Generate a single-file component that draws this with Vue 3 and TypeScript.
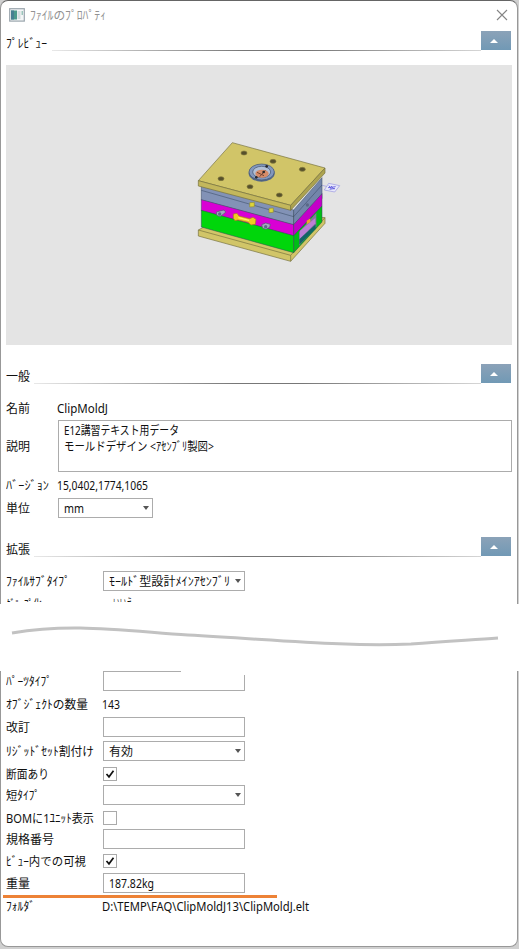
<script setup lang="ts">
import { ref } from 'vue'

interface Row {
  label: string
  width: number
  kind: 'text' | 'input' | 'select' | 'check'
  value?: string
  valueWidth?: number
  checked?: boolean
  height: number
}

// Condenses a run of text to the given advance width.
const vFit = {
  mounted(el: HTMLElement, binding: { value?: number }) {
    if (!binding.value || !el.offsetWidth) return
    el.style.transform = `scaleX(${binding.value / el.getBoundingClientRect().width})`
  },
}

const rows = ref<Row[]>([
  { label: 'ﾊﾟｰﾂﾀｲﾌﾟ', width: 46, kind: 'input', height: 20 },
  { label: 'ｵﾌﾞｼﾞｪｸﾄの数量', width: 82, kind: 'text', value: '143', valueWidth: 18, height: 26 },
  { label: '改訂', width: 24, kind: 'input', height: 20 },
  { label: 'ﾘｼﾞｯﾄﾞｾｯﾄ割付け', width: 88, kind: 'select', value: '有効', valueWidth: 24, height: 28 },
  { label: '断面あり', width: 43, kind: 'check', checked: true, height: 18 },
  { label: '短ﾀｲﾌﾟ', width: 34, kind: 'select', height: 24 },
  { label: 'BOMに1ﾕﾆｯﾄ表示', width: 88, kind: 'check', checked: false, height: 22 },
  { label: '規格番号', width: 48, kind: 'input', height: 20 },
  { label: 'ﾋﾞｭｰ内での可視', width: 80, kind: 'check', checked: true, height: 24 },
  { label: '重量', width: 24, kind: 'input', value: '187.82kg', valueWidth: 45, height: 20 },
  { label: 'ﾌｫﾙﾀﾞ', width: 29, kind: 'text', value: 'D:\\TEMP\\FAQ\\ClipMoldJ13\\ClipMoldJ.elt', valueWidth: 207, height: 26 },
])
</script>

<template>
  <div class="screen">
    <div class="dialog">
      <header class="titlebar">
        <svg class="appicon" viewBox="0 0 16 14" width="16" height="14">
          <rect x=".7" y=".7" width="14.6" height="12.4" fill="#f4f6f7" stroke="#9aa5ad" stroke-width="1.2" />
          <rect x="2" y="2.5" width="6" height="9" fill="#4c9a8c" />
          <rect x="2" y="2.5" width="3" height="9" fill="#477f91" />
          <rect x="8.5" y="3" width="3" height="8" fill="#d5dde0" />
          <rect x="12.5" y="3" width="1.5" height="4" fill="#9bc5bc" />
        </svg>
        <span v-fit="76" class="t title">ﾌｧｲﾙのﾌﾟﾛﾊﾟﾃｨ</span>
        <svg class="close" viewBox="0 0 12 12" width="12" height="12"><path d="M1 1L11 11M11 1L1 11" /></svg>
      </header>

      <section class="head">
        <span v-fit="41" class="t">ﾌﾟﾚﾋﾞｭｰ</span><i class="rule"></i>
        <button class="fold"><svg viewBox="0 0 8 4" width="8" height="4"><path d="M0 4L4 0L8 4Z" fill="#fff" /></svg></button>
      </section>

      <div class="preview">
        <svg class="mold" viewBox="0 0 495 420" width="165" height="140" stroke-linejoin="round">
          <g stroke="#746f3d" stroke-width="2">
            <path d="M40 300L150 240L420 263V280L317 394L40 318Z" fill="#d1c568" />
            <path d="M40 300L317 376L420 263M317 376V394" fill="none" />
          </g>
          <g stroke="#34475f" stroke-width="1.5">
            <path d="M49 165L326 240V285L49 210Z" fill="#8292b6" />
            <path d="M326 240L411 143V206L326 285Z" fill="#7385aa" />
            <path d="M49 181L326 260L411 165" fill="none" />
            <path d="M49 209L326 284V318L49 242Z" fill="#d900d4" />
            <path d="M326 284L411 191V228L326 318Z" fill="#c400c8" />
            <path d="M49 241L326 317V368L49 291Z" fill="#00d60b" />
            <path d="M326 317L411 228V276L326 368Z" fill="#00bd16" />
          </g>
          <path d="M342 306L394 249V289L342 347Z" fill="#87749f" />
          <path d="M345 302L391 264V280L345 326Z" fill="#bc80d5" />
          <path d="M343 328L392 283V296L343 344Z" fill="#136467" />
          <path d="M365 272L376 265V277L365 283Z" fill="#f1a22d" />
          <g stroke="#746f3d" stroke-width="2">
            <path d="M142 38L420 114L317 226L40 152Z" fill="#d1c568" />
            <path d="M40 152L317 226V241L40 168Z" fill="#c3b75c" />
            <path d="M317 226L420 114V129L317 241Z" fill="#ada34f" />
          </g>
          <g fill="#56502c" stroke="#837a3d" stroke-width="2">
            <ellipse cx="177" cy="69" rx="9" ry="6" /><ellipse cx="264" cy="94" rx="9" ry="6" />
            <ellipse cx="352" cy="118" rx="9" ry="6" /><ellipse cx="108" cy="146" rx="9" ry="6" />
            <ellipse cx="195" cy="170" rx="9" ry="6" /><ellipse cx="283" cy="195" rx="9" ry="6" />
          </g>
          <ellipse cx="230" cy="130" rx="39" ry="25" fill="#536789" />
          <ellipse cx="230" cy="126" rx="38" ry="24" fill="#8297bd" stroke="#40516d" stroke-width="2" />
          <ellipse cx="230" cy="126" rx="27" ry="17" fill="#b1c0d6" stroke="#40516d" stroke-width="2" />
          <ellipse cx="231" cy="131" rx="20" ry="12" fill="#d68b68" />
          <path d="M216 127L237 137M224 140L241 121" stroke="#764735" stroke-width="3" />
          <g fill="#29282b"><circle cx="245" cy="109" r="4" /><circle cx="236" cy="126" r="4" /><circle cx="214" cy="142" r="4" /></g>
          <g fill="#ddd43a" stroke="#8d8940" stroke-width="2"><path d="M194 218L208 217V230L194 231Z" /><path d="M252 235L265 234V247L252 248Z" /></g>
          <path d="M145 252L156 250L162 258L194 266L204 262L213 268L211 283L198 285L189 277L159 270L150 272L145 265Z" fill="#efcb23" stroke="#a57723" stroke-width="2" />
          <path d="M160 263L192 271" stroke="#fff06a" stroke-width="4" />
          <g fill="#a1abbe" stroke="#4e596e" stroke-width="2"><path d="M94 246L108 242L117 240L122 246L116 252L105 260L95 256Z" /><path d="M230 284L242 279L256 283L254 292L243 298L233 295Z" /></g>
          <g fill="#596987"><circle cx="104" cy="252" r="5" /><circle cx="242" cy="290" r="5" /><circle cx="367" cy="225" r="5" /></g>
          <path d="M411 166L424 169M418 180L431 160L464 167L449 186Z" fill="#e8e8fa" stroke="#7c78dc" stroke-width="1.5" />
          <path d="M432 167L439 177M438 168L447 178M429 173L452 170M434 178L450 175" stroke="#5a54dc" stroke-width="2.5" />
        </svg>
      </div>

      <section class="head general">
        <span v-fit="24" class="t">一般</span><i class="rule"></i>
        <button class="fold"><svg viewBox="0 0 8 4" width="8" height="4"><path d="M0 4L4 0L8 4Z" fill="#fff" /></svg></button>
      </section>
      <div class="form short">
        <div class="row name"><label><span v-fit="24" class="t">名前</span></label><span v-fit="51" class="t value">ClipMoldJ</span></div>
        <div class="row desc">
          <label><span v-fit="24" class="t">説明</span></label>
          <div class="box area">
            <span v-fit="115" class="t">E12講習テキスト用データ</span>
            <span v-fit="150" class="t">モールドデザイン &lt;ｱｾﾝﾌﾞﾘ製図&gt;</span>
          </div>
        </div>
        <div class="row version"><label><span v-fit="43" class="t">ﾊﾞｰｼﾞｮﾝ</span></label><span v-fit="91" class="t value">15,0402,1774,1065</span></div>
        <div class="row"><label><span v-fit="24" class="t">単位</span></label><div class="box unit"><span v-fit="20" class="t">mm</span><i class="arrow"></i></div></div>
      </div>

      <section class="head extended">
        <span v-fit="24" class="t">拡張</span><i class="rule"></i>
        <button class="fold"><svg viewBox="0 0 8 4" width="8" height="4"><path d="M0 4L4 0L8 4Z" fill="#fff" /></svg></button>
      </section>
      <div class="form subtype">
        <div class="row"><label><span v-fit="64" class="t">ﾌｧｲﾙｻﾌﾞﾀｲﾌﾟ</span></label><div class="box"><span v-fit="121" class="t">ﾓｰﾙﾄﾞ型設計ﾒｲﾝｱｾﾝﾌﾞﾘ</span><i class="arrow"></i></div></div>
        <div class="cut"><div class="row cutrow"><label><span v-fit="36" class="t">ｸﾞﾙｰﾌﾟ化</span></label><span v-fit="20" class="t cutvalue">いいえ</span></div></div>
      </div>
      <div class="tear">
        <svg viewBox="0 0 519 67" width="519" height="67"><path d="M12 29C70 19 117 26 188 31C280 36 348 43 411 40C447 37 472 36 498 34" /></svg>
      </div>
      <div class="form details">
        <div v-for="row in rows" :key="row.label" class="row" :style="{ height: row.height + 'px' }">
          <label><span v-fit="row.width" class="t">{{ row.label }}</span></label>
          <span v-if="row.kind === 'text'" v-fit="row.valueWidth" class="t value">{{ row.value }}</span>
          <div v-else-if="row.kind === 'check'" class="check"><svg v-if="row.checked" viewBox="0 0 10 10" width="10" height="10"><path d="M1.5 5L4 7.8L8.5 1.8" /></svg></div>
          <div v-else class="box">
            <span v-if="row.value" v-fit="row.valueWidth" class="t">{{ row.value }}</span><i v-if="row.kind === 'select'" class="arrow"></i>
          </div>
        </div>
        <i class="erased"></i>
        <i class="highlight"></i>
      </div>
    </div>
  </div>
</template>

<style>
body { background: #d0d0d0; overflow: hidden; }
</style>
<style scoped>
* { box-sizing: border-box; }
.screen { width: 519px; height: 949px; overflow: hidden; background: #d0d0d0; }
.dialog { width: 518px; height: 947px; background: #fff; border: 1px solid #989898; border-top-color: #656565; border-radius: 8px; font: 12px/16px "Noto Sans", "Noto Sans CJK JP", sans-serif; color: #101010; }
.t { display: inline-block; flex: none; white-space: pre; transform-origin: left center; line-height: 16px; }
.titlebar { height: 30px; display: flex; align-items: center; padding: 0 9px 2px 8px; }
.title { margin-left: 5px; color: #929292; padding-top: 1px; }
.close { margin-left: auto; }
.close path { fill: none; stroke: #858585; stroke-width: 1.1; }
.head { height: 20px; display: flex; align-items: flex-end; padding: 0 6px 0 5px; }
.head .t { align-self: center; padding-top: 6px; }
.rule { flex: 1; height: 1px; margin-left: 4px; background: linear-gradient(90deg, #e8e8e8, #777 45%, #777 60%, #d6d6d6); }
.fold { width: 30px; height: 19px; margin: 0 0 1px; padding: 0; border: 0; background: linear-gradient(#8ba2b8, #7199b5); display: flex; align-items: center; justify-content: center; }
.fold svg { margin-right: 4px; }
.preview { width: 506px; height: 280px; margin: 14px 0 0 5px; padding: 65px 0 0 179px; background: #e4e4e4; }
.mold { display: block; }
.general { margin-top: 19px; }
.extended { margin-top: 19px; }
.row { display: flex; align-items: center; height: 20px; padding-left: 5px; }
label { width: 97px; flex: none; display: flex; padding-top: 2px; }
.value { padding-top: 2px; margin-left: -1px; }
.short { padding-top: 12px; }
.short label { width: 52px; }
.name { height: 24px; }
.desc { height: 52px; }
.version { height: 26px; }
.box { width: 142px; height: 20px; flex: none; border: 1px solid #acacac; background: #fff; display: flex; align-items: center; padding: 1px 0 0 5px; position: relative; }
.area { width: 454px; height: 52px; flex-direction: column; align-items: flex-start; padding-top: 2px; }
.unit { width: 95px; }
.arrow { position: absolute; right: 3px; top: 7px; border: 3px solid transparent; border-top: 4px solid #555; border-bottom: 0; }
.subtype { padding-top: 14px; height: 47px; }
.cut { height: 11px; overflow: hidden; }
.cutrow { height: 25px; }
.cutvalue { margin-left: 10px; }
.tear { width: 519px; height: 67px; margin-left: -1px; position: relative; z-index: 1; background: #fff; }
.tear svg { display: block; }
.tear path { fill: none; stroke: #c2c2c2; stroke-width: 3; }
.details { position: relative; }
.check { width: 14px; height: 14px; border: 1px solid #aaa; display: flex; align-items: center; justify-content: center; }
.check path { fill: none; stroke: #111; stroke-width: 1.7; }
.erased { position: absolute; left: 180px; top: 0; width: 65px; height: 4px; background: #fff; }
.highlight { position: absolute; left: 2px; top: 224px; width: 274px; height: 3px; background: #ed8236; }
</style>
